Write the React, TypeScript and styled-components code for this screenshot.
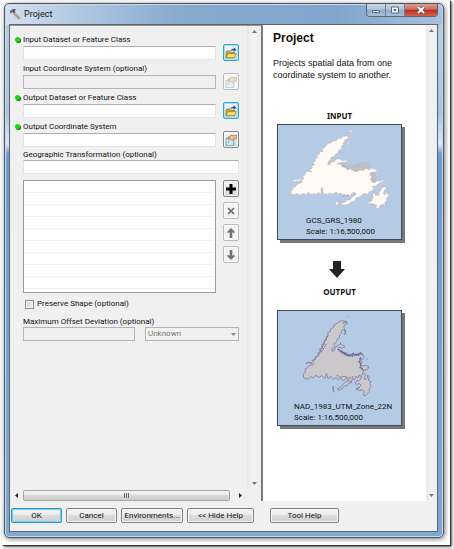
import React from "react";
import styled, { createGlobalStyle, css } from "styled-components";

const GlobalStyle = createGlobalStyle`
  *, *::before, *::after { box-sizing: border-box; }
  html, body, #root { height: 100%; }
  body {
    margin: 0;
    background: #fff;
    color: #111;
    font: 8px/10px Roboto, "Noto Sans", sans-serif;
  }
  button, input, select { font: inherit; color: inherit; margin: 0; }
`;

const Page = styled.div`
  height: 100%;
  padding: 0 4px 4px 2px;
  overflow: hidden;
`;

const Sheet = styled.div`
  height: 100%;
  padding: 3px 6px 7px 2px;
  background: #fff;
  box-shadow: 1px 1px 1px #333, 2px 2px 3px #666;
`;

const Window = styled.main`
  display: flex;
  flex-direction: column;
  height: 100%;
  padding: 0 5px 5px 4px;
  border: 1px solid #4b535d;
  border-radius: 5px;
  background:
    linear-gradient(90deg, #d4e0ee 0, #b3c9e2 70px, #88abd0 170px, #80a5cc 330px, #a9c1dc 100%) top / 100% 21px no-repeat,
    linear-gradient(#b9cee5 0, #a9c3df 110px, #dce9f5 140px, #6f9bcd 150px, #7fa8d4 100%);
  box-shadow: inset 0 0 0 1px #c7dcf2, 1px 1px 5px #777;
`;

const TitleBar = styled.header`
  display: flex;
  align-items: flex-start;
  height: 20px;
  flex: none;
  gap: 3px;
`;

const Title = styled.h1`
  flex: 1;
  margin: 5px 0 0;
  font-size: 9px;
  font-weight: 400;
  line-height: 10px;
`;

const HammerSvg = styled.svg`
  width: 12px;
  height: 12px;
  margin-top: 4px;
`;

const Controls = styled.div`
  display: flex;
  height: 13px;
  border: 1px solid #56677c;
  border-top: 0;
  border-radius: 0 0 4px 4px;
  overflow: hidden;
`;

const ControlButton = styled.button<{ $close?: boolean }>`
  display: grid;
  place-items: center;
  width: ${p => (p.$close ? 32 : 19)}px;
  padding: 0;
  border: 0;
  border-right: ${p => (p.$close ? 0 : 1)}px solid #6b7f98;
  background: ${p => p.$close
    ? "linear-gradient(#dda096 0, #cf6757 45%, #b92d1c 50%, #d0614b)"
    : "linear-gradient(#c9d7e7 0, #afc3da 45%, #8fabc9 50%, #a9c0da)"};
`;

const Client = styled.div`
  flex: 1;
  min-height: 0;
  display: flex;
  flex-direction: column;
  border: 1px solid #5c6570;
  background: #f0f0f0;
`;

const Panes = styled.div`
  flex: 1;
  min-height: 0;
  display: grid;
  grid-template-columns: minmax(0, 251fr) minmax(0, 176fr);
`;

const FormPane = styled.div`
  display: grid;
  grid-template: minmax(0, 1fr) 12px / minmax(0, 1fr) 14px;
  border-top: 1px solid #999;
`;

const Form = styled.form`
  padding: 7px 8px 0 4px;
  overflow: hidden;
`;

const Field = styled.div`
  display: grid;
  grid-template-columns: 9px minmax(0, 1fr) 16px;
  height: 29px;
`;

const Dot = styled.span`
  display: block;
  width: 5px;
  height: 5px;
  margin: 4px 0 0 1px;
  border-radius: 50%;
  background: #12dc12;
  box-shadow: 1px 1px 0 #2c5a2c;
`;

const FieldBody = styled.div`
  padding-right: 7px;
`;

const Label = styled.label<{ $tight?: boolean }>`
  display: block;
  height: ${p => (p.$tight ? 11 : 13)}px;
  line-height: ${p => (p.$tight ? 11 : 13)}px;
  white-space: nowrap;
`;

const boxStyle = css`
  display: block;
  width: 100%;
  height: 14px;
  padding: 0 2px;
  border: 1px solid #e2e3ea;
  border-top-color: #abadb3;
  border-radius: 0;
  background: #fff;
  outline: none;
  &:disabled { border-color: #b4b4b4; background: #f0f0f0; }
`;

const TextBox = styled.input`${boxStyle}`;

const Block = styled.div`
  margin-left: 9px;
`;

const IconButton = styled.button<{ $active?: boolean; $low?: boolean }>`
  display: grid;
  place-items: center;
  width: 16px;
  height: 17px;
  padding: 0;
  margin-top: ${p => (p.$low ? 11 : 0)}px;
  border: 1px solid ${p => (p.$active ? "#2ba5d6" : "#858585")};
  border-radius: 2px;
  background: linear-gradient(#f4f4f4, #e8e8e8 50%, #d4d4d4);
  box-shadow: inset 0 0 0 1px ${p => (p.$active ? "#a6e3fa" : "#fafafa")};
  &:disabled { border-color: #b9bbbd; background: #f4f4f4; }
  svg { display: block; }
`;

const ListRow = styled.div`
  display: grid;
  grid-template-columns: minmax(0, 1fr) 16px;
  column-gap: 7px;
  margin-top: 6px;
`;

const ListBox = styled.div`
  height: 113px;
  padding: 0 1px;
  border: 1px solid #999ba3;
  background: #fff;
`;

const ListLine = styled.div`
  height: 12px;
  border-bottom: 1px solid #efefef;
`;

const ButtonStack = styled.div`
  display: flex;
  flex-direction: column;
  gap: 5px;
`;

const CheckLabel = styled.label`
  display: flex;
  align-items: center;
  gap: 3px;
  height: 10px;
  margin: 6px 0 7px 2px;
`;

const CheckBox = styled.input`
  appearance: none;
  width: 9px;
  height: 9px;
  border: 1px solid #8e8f8f;
  background: linear-gradient(135deg, #c8ccd0, #f6f6f6);
  box-shadow: inset 0 0 0 1px #f4f4f4;
`;

const OffsetRow = styled.div`
  display: grid;
  grid-template-columns: minmax(0, 112fr) minmax(0, 94fr);
  column-gap: 10px;
`;

const SelectWrap = styled.div`
  position: relative;
  svg { position: absolute; right: 3px; top: 5px; }
`;

const Select = styled.select`
  ${boxStyle}
  appearance: none;
  color: #777;
  opacity: 1;
`;

const ScrollBar = styled.div<{ $horizontal?: boolean }>`
  display: flex;
  flex-direction: ${p => (p.$horizontal ? "row" : "column")};
  justify-content: space-between;
  align-items: center;
  padding: ${p => (p.$horizontal ? "0 3px" : "2px 0")};
  background: ${p => (p.$horizontal ? "#f0f0f0" : "linear-gradient(90deg, #e7e7e7, #f3f3f3 40%, #eee)")};
`;

const ArrowButton = styled.button`
  display: grid;
  place-items: center;
  width: 7px;
  height: 7px;
  padding: 0;
  border: 0;
  background: none;
`;

const Thumb = styled.div`
  display: grid;
  place-items: center;
  flex: 1;
  height: 11px;
  margin: 0 7px 0 3px;
  border: 1px solid #a5a5a5;
  border-radius: 2px;
  background: linear-gradient(#f5f5f5, #e8e8e8 45%, #d8d8d8 50%, #cecece);
`;

const HelpPane = styled.aside`
  display: grid;
  grid-template-columns: minmax(0, 1fr) 11px;
  border-left: 2px solid #777c82;
  background: #fff;
`;

const HelpContent = styled.article`
  padding: 6px 22px 0 10px;
  font-family: "Liberation Sans", Arial, sans-serif;
`;

const HelpTitle = styled.h2`
  margin: 0;
  font-size: 12px;
  line-height: 14px;
`;

const HelpText = styled.p`
  margin: 12px -4px 29px 0;
  font-size: 9px;
  line-height: 12px;
`;

const Figure = styled.figure`
  margin: 0 0 0 4px;
  width: 125px;
`;

const Caption = styled.figcaption<{ $gap: number }>`
  margin-bottom: ${p => p.$gap}px;
  font: 700 8px/12px "Noto Sans", sans-serif;
  text-align: center;
`;

const MapFrame = styled.div<{ $indent: number }>`
  display: flex;
  flex-direction: column;
  height: 116px;
  border: 1px solid #414956;
  background: #b5cae5;
  box-shadow: 3px 3px 0 #777;
  font: 8px/11px Roboto, sans-serif;
  svg { display: block; width: 100%; height: 90px; flex: none; }
  p { margin: 0 0 0 ${p => p.$indent}px; white-space: nowrap; }
`;

const DownArrow = styled.svg`
  display: block;
  margin: 21px 0 8px 56px;
`;

const Footer = styled.footer`
  display: flex;
  height: 30px;
  padding: 7px 1px 8px;
  gap: 4px;
`;

const FooterButton = styled.button<{ $w: number; $primary?: boolean; $apart?: boolean }>`
  flex: 0 1 ${p => p.$w}px;
  height: 15px;
  margin-left: ${p => (p.$apart ? 12 : 0)}px;
  padding: 0;
  border: 1px solid ${p => (p.$primary ? "#3094bd" : "#808080")};
  border-radius: 2px;
  background: linear-gradient(#f3f3f3, #ebebeb 48%, #dcdcdc 50%, #cfcfcf);
  box-shadow: inset 0 0 0 1px ${p => (p.$primary ? "#6fd5f6" : "#fafafa")};
  line-height: 12px;
  white-space: nowrap;
`;

const Hammer = () => (
  <HammerSvg viewBox="0 0 36 36" aria-hidden="true">
    <path d="M16 12l17 17-4 5-17-18z" fill="#b9a58d" stroke="#7c7266" strokeWidth="1.5" />
    <path d="M2 13l3-6 8-4 9 0-4 3 1 5-5 5-4-4-3 1-1 4z" fill="#4f575e" />
    <path d="M7 8l7-3" stroke="#9ba5ac" strokeWidth="2" />
  </HammerSvg>
);

const FolderIcon = () => (
  <svg width="12" height="12" viewBox="0 0 36 36" aria-hidden="true">
    <path d="M3 32V15l3-3h8l3 4h12v16z" fill="#d3a62f" stroke="#8c7223" strokeWidth="2" />
    <path d="M3 32l6-12h25l-6 12z" fill="#fbe276" stroke="#8c7223" strokeWidth="2" />
    <path d="M16 12c2-6 6-7 10-6V1l8 7-8 6v-4c-4-1-6 0-10 2z" fill="#174f91" />
  </svg>
);

const PropertiesIcon = ({ faded }: { faded?: boolean }) => (
  <svg width="12" height="12" viewBox="0 0 36 36" opacity={faded ? 0.45 : 1} aria-hidden="true">
    <path d="M3 13h23v21H3z" fill="#e9f6fc" stroke="#5a87a4" strokeWidth="2.5" />
    <path d="M8 20h5v8H8z" fill="#75b9dc" />
    <path d="M17 22h6M17 28h6" stroke="#9fc9df" strokeWidth="2" />
    <path d="M9 10l8-6 10 1 8-2v11l-9 2-5 4-4-4-6 2-2-3 5-4z" fill="#e9bd83" stroke="#705035" strokeWidth="1.5" />
  </svg>
);

type Dir = "up" | "down" | "left" | "right";
const angles: Record<Dir, number> = { up: 0, right: 90, down: 180, left: 270 };

const Triangle = ({ dir, color = "#777" }: { dir: Dir; color?: string }) => (
  <svg width="5" height="5" viewBox="0 0 10 10" aria-hidden="true">
    <path d="M0 8l5-6 5 6z" fill={color} transform={`rotate(${angles[dir]} 5 5)`} />
  </svg>
);

const ListArrow = ({ down }: { down?: boolean }) => (
  <svg width="10" height="12" viewBox="0 0 30 36" aria-hidden="true">
    <path d="M15 3l12 12-4 4-4-4v18h-8V15l-4 4-4-4z" fill="#737373" transform={down ? "rotate(180 15 18)" : undefined} />
  </svg>
);

const VerticalScroll = ({ name }: { name: string }) => (
  <ScrollBar>
    <ArrowButton aria-label={`Scroll ${name} up`}><Triangle dir="up" /></ArrowButton>
    <ArrowButton aria-label={`Scroll ${name} down`}><Triangle dir="down" /></ArrowButton>
  </ScrollBar>
);

const InputMap = () => (
  <svg viewBox="-27 -3 369 270" aria-hidden="true">
    <path
      d="M162 118L172 116 180 122 190 119 200 121 207 114 218 116 226 110 238 110 247 112 249 124 240 130 226 128 214 134 200 136 192 131 180 130 166 127ZM249 143L262 142 268 152 266 166 254 170 246 160ZM160 196L178 192 190 200 184 212 166 212Z"
      fill="#bfbec3" stroke="#aeabae" strokeWidth="1.5" strokeDasharray="4 2"
    />
    <g fill="#fffaf4" stroke="#c0b5b0" strokeWidth="1.8" strokeLinejoin="round">
      <path d="M13 205L12 196 17 190 20 184 27 180 33 174 45 169 43 162 50 158 47 151 54 146 55 139 65 136 74 138 66 131 76 126 74 121 82 116 79 109 85 105 83 99 91 96 89 88 97 84 98 77 107 77 106 68 114 64 118 57 125 52 132 51 137 45 148 44 153 37 162 37 167 31 179 30 187 34 181 39 172 43 174 49 168 51 170 56 163 61 165 68 155 73 154 80 146 84 142 91 132 95 131 102 123 107 125 114 121 117 130 114 132 108 141 107 148 99 160 99 167 104 177 102 187 104 175 109 162 109 151 114 162 115 165 122 176 125 181 131 191 129 202 136 211 137 217 132 229 133 237 127 247 131 255 126 266 130 273 136 262 139 250 140 249 147 256 154 250 159 255 168 264 170 269 164 281 165 289 160 292 165 280 170 272 175 265 181 255 181 261 187 257 193 246 199 242 206 232 202 224 207 218 214 207 216 204 224 193 227 187 234 173 237 163 236 165 230 174 228 177 223 190 221 195 213 204 208 208 203 201 199 193 204 190 210 180 204 178 211 171 204 162 209 164 202 152 203 147 197 142 203 132 205 127 200 122 206 112 203 108 205 107 185 103 186 102 205 93 200 87 206 80 203 73 206 63 199 59 206 47 203 39 207 29 203 23 206Z" />
      <path d="M257 202L262 200 266 207 277 208 275 200 281 194 285 184 298 181 299 187 292 193 289 203 294 206 303 196 302 205 307 209 298 217 300 226 294 229 294 239 286 235 279 239 274 249 266 246 269 237 259 235 251 232 242 234 244 228 255 224 257 215Z" />
      <path d="M17 166L24 160 35 160 41 156 44 160 38 165 27 165 21 169ZM186 18L190 11 195 15 191 20ZM182 30L188 28 187 33ZM181 49L186 47 188 55 184 55ZM174 67L185 66 182 72ZM144 230L150 226 154 232 151 239 147 237Z" />
    </g>
  </svg>
);

const OutputMap = () => (
  <svg viewBox="-57 -3 369 270" aria-hidden="true">
    <g fill="#cac8ca" stroke="#807e9f" strokeWidth="2.5" strokeLinejoin="round">
      <path d="M20 196L19 186 25 181 24 171 32 167 36 161 47 158 50 151 45 145 55 142 55 134 65 130 62 123 70 119 67 112 76 108 74 99 82 96 81 88 88 83 87 75 93 70 92 62 100 59 101 51 109 46 112 38 121 34 127 28 138 26 148 28 151 35 143 38 140 45 143 51 134 55 133 63 128 68 127 77 121 80 119 89 111 95 112 103 105 109 105 118 111 116 114 106 123 101 130 96 139 100 144 104 135 108 127 106 121 111 131 116 134 123 143 125 150 131 161 130 168 126 178 129 187 124 196 129 202 134 196 142 190 143 195 151 189 156 196 163 205 160 215 164 212 172 202 175 196 181 199 188 193 194 187 189 183 197 177 193 173 203 166 200 163 211 154 214 151 221 142 222 136 231 125 235 121 230 132 226 139 216 146 209 155 206 149 198 138 206 131 199 125 204 118 196 108 202 101 193 94 201 88 184 84 199 75 191 65 196 57 190 49 197 40 194 34 201 24 200Z" />
      <path d="M175 214L180 205 187 208 192 199 193 190 202 184 206 188 202 197 205 204 211 196 212 189 217 195 214 205 222 209 218 216 223 223 216 231 217 238 210 245 204 252 198 248 203 240 197 233 187 236 178 231 187 226 192 219 186 214 180 218Z" />
    </g>
    <g fill="none" stroke="#66658d" strokeWidth="5" strokeDasharray="5 2 3 2">
      <path d="M124 112L132 119 145 123 155 130 169 125 180 128 191 123 199 129" />
      <path d="M132 117L147 129 159 132 174 130 189 128M191 136L187 148 192 158 190 166 197 172 201 178" />
      <path d="M94 70L81 91 74 110 66 127 49 147M87 97L73 121" strokeWidth="3" />
      <path d="M120 190L129 196 143 193 156 199 171 194M157 206L164 214M178 231L187 227" strokeWidth="3" />
    </g>
    <path d="M27 155L33 151 45 154M141 55L145 54 144 67 140 66M109 222L108 236 113 240M137 33L150 29M128 97L133 92M209 143L212 141M151 14L153 15" fill="none" stroke="#716f95" strokeWidth="3" />
  </svg>
);

const fields = [
  { label: "Input Dataset or Feature Class", required: true, icon: "folder" },
  { label: "Input Coordinate System (optional)", required: false, icon: "properties" },
  { label: "Output Dataset or Feature Class", required: true, icon: "folder" },
  { label: "Output Coordinate System", required: true, icon: "properties" },
];

export default function App() {
  return (
    <>
      <GlobalStyle />
      <Page>
        <Sheet>
          <Window>
            <TitleBar>
              <Hammer />
              <Title>Project</Title>
              <Controls>
                <ControlButton aria-label="Minimize">
                  <svg width="10" height="8" viewBox="0 0 10 8"><path d="M1.5 4.5h7v2h-7z" fill="#fff" stroke="#59697c" /></svg>
                </ControlButton>
                <ControlButton aria-label="Maximize">
                  <svg width="10" height="8" viewBox="0 0 10 8"><path d="M1.5 1h7v6h-7zM4 3.5h2v1H4z" fill="#fff" stroke="#59697c" /></svg>
                </ControlButton>
                <ControlButton $close aria-label="Close">
                  <svg width="10" height="8" viewBox="0 0 10 8">
                    <path d="M2 1l6 6M8 1L2 7" stroke="#5c4b55" strokeWidth="3.4" />
                    <path d="M2 1l6 6M8 1L2 7" stroke="#fff" strokeWidth="2" />
                  </svg>
                </ControlButton>
              </Controls>
            </TitleBar>
            <Client>
              <Panes>
                <FormPane>
                  <Form onSubmit={e => e.preventDefault()}>
                    {fields.map((f, i) => (
                      <Field key={f.label}>
                        <div>{f.required && <Dot />}</div>
                        <FieldBody>
                          <Label htmlFor={`field-${i}`}>{f.label}</Label>
                          <TextBox id={`field-${i}`} disabled={!f.required} />
                        </FieldBody>
                        <IconButton type="button" $low $active={f.icon === "folder"} disabled={!f.required} aria-label={`Choose ${f.label}`}>
                          {f.icon === "folder" ? <FolderIcon /> : <PropertiesIcon faded={!f.required} />}
                        </IconButton>
                      </Field>
                    ))}
                    <Block>
                      <Label $tight htmlFor="transformation">Geographic Transformation (optional)</Label>
                      <TextBox id="transformation" />
                      <ListRow>
                        <ListBox role="listbox" aria-label="Transformations">
                          {Array.from({ length: 9 }, (_, i) => <ListLine key={i} />)}
                        </ListBox>
                        <ButtonStack>
                          <IconButton type="button" aria-label="Add">
                            <svg width="12" height="12" viewBox="0 0 12 12"><path d="M6 1v10M1 6h10" stroke="#000" strokeWidth="3" /></svg>
                          </IconButton>
                          <IconButton type="button" disabled aria-label="Remove">
                            <svg width="10" height="10" viewBox="0 0 10 10"><path d="M2 2l6 6M8 2L2 8" stroke="#666" strokeWidth="1.5" /></svg>
                          </IconButton>
                          <IconButton type="button" disabled aria-label="Move up"><ListArrow /></IconButton>
                          <IconButton type="button" disabled aria-label="Move down"><ListArrow down /></IconButton>
                        </ButtonStack>
                      </ListRow>
                      <CheckLabel>
                        <CheckBox type="checkbox" />
                        Preserve Shape (optional)
                      </CheckLabel>
                      <Label $tight htmlFor="deviation">Maximum Offset Deviation (optional)</Label>
                      <OffsetRow>
                        <TextBox id="deviation" disabled />
                        <SelectWrap>
                          <Select disabled aria-label="Deviation unit"><option>Unknown</option></Select>
                          <Triangle dir="down" color="#888" />
                        </SelectWrap>
                      </OffsetRow>
                    </Block>
                  </Form>
                  <VerticalScroll name="form" />
                  <ScrollBar $horizontal>
                    <ArrowButton aria-label="Scroll form left"><Triangle dir="left" color="#222" /></ArrowButton>
                    <Thumb>
                      <svg width="7" height="5" viewBox="0 0 7 5"><path d="M1.5 0v5M3.5 0v5M5.5 0v5" stroke="#666" /></svg>
                    </Thumb>
                    <ArrowButton aria-label="Scroll form right"><Triangle dir="right" color="#222" /></ArrowButton>
                  </ScrollBar>
                </FormPane>
                <HelpPane>
                  <HelpContent>
                    <HelpTitle>Project</HelpTitle>
                    <HelpText>Projects spatial data from one coordinate system to another.</HelpText>
                    <Figure>
                      <Caption $gap={2}>INPUT</Caption>
                      <MapFrame $indent={28}>
                        <InputMap />
                        <p>GCS_GRS_1980</p>
                        <p>Scale: 1:16,500,000</p>
                      </MapFrame>
                    </Figure>
                    <DownArrow width="24" height="17" viewBox="0 0 24 17" aria-hidden="true">
                      <path d="M4 0h8v8h4l-8 9-8-9h4z" fill="#222" />
                    </DownArrow>
                    <Figure>
                      <Caption $gap={12}>OUTPUT</Caption>
                      <MapFrame $indent={16}>
                        <OutputMap />
                        <p>NAD_1983_UTM_Zone_22N</p>
                        <p>Scale: 1:16,500,000</p>
                      </MapFrame>
                    </Figure>
                  </HelpContent>
                  <VerticalScroll name="help" />
                </HelpPane>
              </Panes>
              <Footer>
                <FooterButton $w={51} $primary>OK</FooterButton>
                <FooterButton $w={51}>Cancel</FooterButton>
                <FooterButton $w={62}>Environments...</FooterButton>
                <FooterButton $w={67}>&lt;&lt; Hide Help</FooterButton>
                <FooterButton $w={69} $apart>Tool Help</FooterButton>
              </Footer>
            </Client>
          </Window>
        </Sheet>
      </Page>
    </>
  );
}
